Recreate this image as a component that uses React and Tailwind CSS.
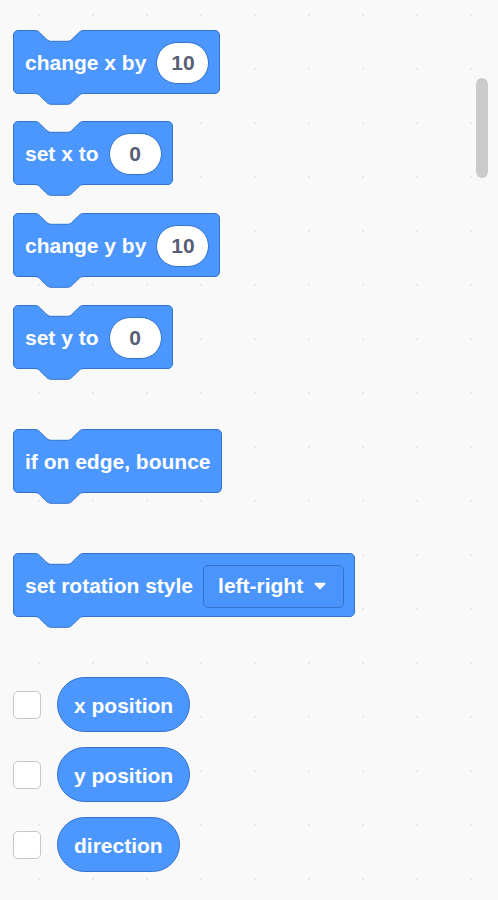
import React from "react";

const CURVE =
  "c2.7,0 4.05,1.35 5.4,2.7 l5.4,5.4 c1.35,1.35 2.7,2.7 5.4,2.7 h16.2 c2.7,0 4.05,-1.35 5.4,-2.7 l5.4,-5.4 c1.35,-1.35 2.7,-2.7 5.4,-2.7";

function TopNotch() {
  return (
    <svg
      className="absolute top-[-1px] left-[20.6px] overflow-visible"
      width="49"
      height="12"
      viewBox="0 0 49 12"
    >
      <path d={`M0,0 L0,0.5 ${CURVE} L48.6,0 Z`} fill="#f9f9f9" />
      <path d={`M0,0.5 ${CURVE}`} fill="none" stroke="#3373CC" strokeWidth="1" />
    </svg>
  );
}

function BottomTab() {
  return (
    <svg
      className="absolute top-full left-[20.6px] overflow-visible"
      width="49"
      height="12"
      viewBox="0 0 49 12"
    >
      <path d={`M0,0 L0,0.5 ${CURVE} L48.6,0 Z`} fill="#4C97FF" />
      <path d={`M0,0.5 ${CURVE}`} fill="none" stroke="#3373CC" strokeWidth="1" />
    </svg>
  );
}

function Block({ children, className = "" }) {
  return (
    <div
      className={`relative self-start flex items-center gap-[10px] h-[64px] pt-[2px] pl-[11px] pr-[10px] rounded-[5px] bg-[#4C97FF] border border-[#3373CC] text-white ${className}`}
    >
      <TopNotch />
      {children}
      <BottomTab />
    </div>
  );
}

function NumInput({ value }) {
  return (
    <div className="flex items-center justify-center h-[42px] min-w-[53px] px-3 rounded-full bg-white border border-[#3373CC] text-[#575E75]">
      {value}
    </div>
  );
}

function Dropdown({ value }) {
  return (
    <div className="flex items-center gap-[11px] h-[43px] pl-[14px] pr-[17px] rounded-[5px] bg-[#4A94FB] border border-[#3373CC] text-white">
      <span>{value}</span>
      <svg width="12" height="8" viewBox="0 0 12 8">
        <path
          d="M1.4,0.8 H10.6 a0.9,0.9 0 0 1 0.65,1.5 L6.7,7 a0.95,0.95 0 0 1 -1.4,0 L0.75,2.3 A0.9,0.9 0 0 1 1.4,0.8 Z"
          fill="#ffffff"
        />
      </svg>
    </div>
  );
}

function Reporter({ label, className = "" }) {
  return (
    <div className={`flex items-center gap-[16px] ${className}`}>
      <div className="w-[28px] h-[28px] rounded-[5px] bg-white border border-[#c6c6c6]" />
      <div className="flex items-center h-[55px] pt-[2px] px-4 rounded-full bg-[#4C97FF] border border-[#3373CC] text-white">
        {label}
      </div>
    </div>
  );
}

export default function App() {
  return (
    <div
      className="relative w-full min-h-[900px] overflow-hidden bg-[#f9f9f9] bg-[radial-gradient(circle,#e9e9e9_1px,transparent_1.6px)] bg-[length:54px_54px] bg-[position:12px_-12px] text-[21px] font-bold leading-normal"
      style={{ fontFamily: '"Liberation Sans", Arial, sans-serif' }}
    >
      <div className="flex flex-col pl-[13px] pt-[30px]">
        <Block>
          <span>change x by</span>
          <NumInput value="10" />
        </Block>
        <Block className="mt-[27px]">
          <span>set x to</span>
          <NumInput value="0" />
        </Block>
        <Block className="mt-[28px]">
          <span>change y by</span>
          <NumInput value="10" />
        </Block>
        <Block className="mt-[28px]">
          <span>set y to</span>
          <NumInput value="0" />
        </Block>
        <Block className="mt-[60px]">
          <span>if on edge, bounce</span>
        </Block>
        <Block className="mt-[60px]">
          <span>set rotation style</span>
          <Dropdown value="left-right" />
        </Block>
        <Reporter label="x position" className="mt-[60px]" />
        <Reporter label="y position" className="mt-[15px]" />
        <Reporter label="direction" className="mt-[15px]" />
      </div>
      <div className="absolute left-[476px] top-[78px] w-[12px] h-[100px] rounded-full bg-[#cbcbcb]" />
    </div>
  );
}
